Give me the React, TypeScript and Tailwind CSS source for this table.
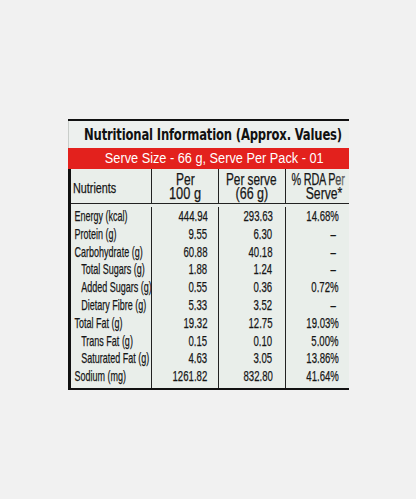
const rows = [
  { name: "Energy (kcal)", a: "444.94", b: "293.63", c: "14.68%", indent: 0 },
  { name: "Protein (g)", a: "9.55", b: "6.30", c: "–", indent: 0 },
  { name: "Carbohydrate (g)", a: "60.88", b: "40.18", c: "–", indent: 0 },
  { name: "Total Sugars (g)", a: "1.88", b: "1.24", c: "–", indent: 1 },
  { name: "Added Sugars (g)", a: "0.55", b: "0.36", c: "0.72%", indent: 1 },
  { name: "Dietary Fibre (g)", a: "5.33", b: "3.52", c: "–", indent: 1 },
  { name: "Total Fat (g)", a: "19.32", b: "12.75", c: "19.03%", indent: 0 },
  { name: "Trans Fat (g)", a: "0.15", b: "0.10", c: "5.00%", indent: 1 },
  { name: "Saturated Fat (g)", a: "4.63", b: "3.05", c: "13.86%", indent: 1 },
  { name: "Sodium (mg)", a: "1261.82", b: "832.80", c: "41.64%", indent: 0 },
];

const sans = "font-['Liberation_Sans',Arial,sans-serif]";
const ink = "[-webkit-text-stroke:0.25px_#161616]";

export default function App() {
  return (
    <div className="w-[416px] h-[499px] bg-[#f1f1f1] pt-[119px] flex justify-center">
      <div className="w-[281px] h-[271px] bg-[#e9eeea] border-t-2 border-t-[#111] flex flex-col">
        <div className="h-[27px] flex items-center justify-center pl-[8px] pt-[1px] border-l border-l-[#c9cdca] bg-[#edf0ee]">
          <span className="block whitespace-nowrap font-['DejaVu_Sans_Condensed','DejaVu_Sans',sans-serif] font-bold text-[15px] tracking-[-0.2px] text-[#111] scale-x-[0.86] origin-center">
            Nutritional Information (Approx. Values)
          </span>
        </div>
        <div className={`h-[21px] bg-[#e3211d] flex items-center justify-center pl-[12px] text-white text-[14px] ${sans}`}>
          <span className="block whitespace-nowrap scale-x-[0.91] origin-center">
            Serve Size - 66 g, Serve Per Pack - 01
          </span>
        </div>
        <div className={`flex-1 flex flex-col border-l-[3px] border-l-[#111] border-b-2 border-b-[#111] text-[#161616] ${sans} ${ink}`}>
          <div className="grid grid-cols-[81px_67px_67px_1fr] h-[35px] border-b border-[#222] text-[16px]">
            <div className="flex items-center pl-[2px] pt-[2px] border-r border-[#222]">
              <span className="block whitespace-nowrap text-[15px] leading-[15px] scale-x-[0.72] origin-left">Nutrients</span>
            </div>
            <div className="flex flex-col items-center justify-center pt-[2px] pl-[2px] border-r border-[#222]">
              <span className="block whitespace-nowrap h-[14px] leading-[14px] scale-x-[0.75]">Per</span>
              <span className="block whitespace-nowrap h-[14px] leading-[14px] scale-x-[0.8]">100 g</span>
            </div>
            <div className="flex flex-col items-center justify-center pt-[2px] border-r border-[#222]">
              <span className="block whitespace-nowrap h-[14px] leading-[14px] scale-x-[0.74]">Per serve</span>
              <span className="block whitespace-nowrap h-[14px] leading-[14px] scale-x-[0.78]">(66 g)</span>
            </div>
            <div className="flex flex-col justify-center pt-[2px]">
              <span className="block whitespace-nowrap h-[14px] leading-[14px] tracking-[-0.3px] scale-x-[0.68] origin-left pl-[8px]">
                % RDA P<span className="text-[#555]">e</span><span className="text-[#888]">r</span>
              </span>
              <span className="block whitespace-nowrap h-[14px] leading-[14px] scale-x-[0.76] origin-left pl-[26px]">Serve*</span>
            </div>
          </div>
          <div className="grid grid-cols-[81px_67px_67px_1fr] flex-1 text-[15px] leading-[17.8px] pt-[3px]">
            <div className="border-r border-[#222] flex flex-col">
              {rows.map((r) => (
                <div
                  key={r.name}
                  className={`whitespace-nowrap scale-x-[0.6] origin-left ${r.indent ? "pl-[17px]" : "pl-[6px]"}`}
                >
                  {r.name}
                </div>
              ))}
            </div>
            <div className="border-r border-[#222] flex flex-col items-end pr-[10px]">
              {rows.map((r) => (
                <div key={r.name} className="whitespace-nowrap scale-x-[0.64] origin-right">
                  {r.a}
                </div>
              ))}
            </div>
            <div className="border-r border-[#222] flex flex-col items-end pr-[12px]">
              {rows.map((r) => (
                <div key={r.name} className="whitespace-nowrap scale-x-[0.64] origin-right">
                  {r.b}
                </div>
              ))}
            </div>
            <div className="flex flex-col items-end pr-[10px]">
              {rows.map((r) => (
                <div key={r.name} className="whitespace-nowrap scale-x-[0.64] origin-right">
                  {r.c === "–" ? <span className="pr-[4px]">–</span> : r.c}
                </div>
              ))}
            </div>
          </div>
        </div>
      </div>
    </div>
  );
}
